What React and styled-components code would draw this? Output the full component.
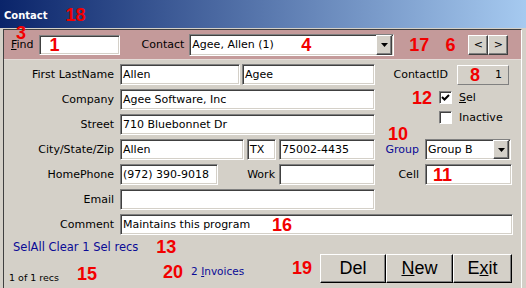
import React from 'react'
import styled, { createGlobalStyle } from 'styled-components'

const GlobalStyle = createGlobalStyle`
  html, body {
    margin: 0;
    padding: 0;
    background: #d4d0c8;
  }
  body {
    font-family: "DejaVu Sans", Verdana, sans-serif;
    font-size: 11px;
    color: #000;
  }
  * {
    box-sizing: border-box;
  }
`

const Window = styled.div`
  display: flex;
  flex-direction: column;
  width: 526px;
  height: 288px;
  overflow: hidden;
  background: #d4d0c8;
`

const TitleBar = styled.div`
  display: flex;
  align-items: center;
  flex: none;
  height: 28px;
  padding: 2px 0 0 4px;
  background: linear-gradient(to right, #0a246a, #a6caf0);
  color: #fff;
  font-weight: bold;
  font-size: 10px;
`

// red annotation numbers
const Num = styled.span`
  font-family: "Liberation Sans", Arial, sans-serif;
  font-weight: bold;
  font-size: 18px;
  line-height: 18px;
  color: #f20000;
  white-space: nowrap;
  margin-left: ${p => p.$ml || 0}px;
  margin-top: ${p => (p.$drop || 0) * 2}px;
`

const OverNum = styled(Num)`
  position: absolute;
  left: ${p => p.$left}px;
  top: ${p => (p.$top === undefined ? 'auto' : p.$top + 'px')};
  bottom: ${p => (p.$bottom === undefined ? 'auto' : p.$bottom)};
`

const Client = styled.div`
  display: flex;
  flex-direction: column;
  flex: 1;
  margin: 1px 4px 0 3px;
  border-top: 1px solid #404040;
  border-left: 1px solid #404040;
  border-right: 1px solid #fff;
`

const Toolbar = styled.div`
  display: flex;
  align-items: center;
  flex: none;
  height: 30px;
  padding-left: 7px;
  background: #c49a9a;
  border-bottom: 1px solid #e4dcd8;
`

const Label = styled.span`
  position: relative;
  line-height: 13px;
  white-space: nowrap;
  margin-left: ${p => p.$ml || 0}px;
  color: ${p => (p.$link ? '#0a0a96' : '#000')};
`

const Field = styled.div`
  position: relative;
  display: flex;
  align-items: center;
  flex: none;
  width: ${p => p.$w}px;
  height: ${p => p.$h || 21}px;
  margin-left: ${p => p.$ml || 0}px;
  padding: 0 1px 0 2px;
  background: #fff;
  border: 1px solid;
  border-color: #808080 #fff #fff #808080;
  box-shadow: inset 1px 1px 0 #404040, inset -1px -1px 0 #d4d0c8;
  white-space: nowrap;
  overflow: hidden;
`

const ReadBox = styled.div`
  position: relative;
  display: flex;
  align-items: center;
  justify-content: flex-end;
  width: 52px;
  height: 20px;
  padding-right: 6px;
  background: #d4d0c8;
  border: 1px solid;
  border-color: #fff #808080 #808080 #fff;
`

const DropBtn = styled.span`
  display: flex;
  align-items: center;
  justify-content: center;
  flex: none;
  width: 16px;
  height: 100%;
  margin-left: auto;
  background: #d4d0c8;
  border: 1px solid;
  border-color: #fff #404040 #404040 #fff;
  box-shadow: inset -1px -1px 0 #808080;
`

const NavBtn = styled.button`
  display: flex;
  align-items: center;
  justify-content: center;
  width: 20px;
  height: 20px;
  margin-left: ${p => p.$ml || 0}px;
  padding: 0;
  background: #d4d0c8;
  border: 1px solid;
  border-color: #fff #404040 #404040 #fff;
  box-shadow: inset -1px -1px 0 #808080;
  font-family: "DejaVu Sans", sans-serif;
  font-size: 11px;
  color: #000;
`

const Body = styled.div`
  display: flex;
  flex-direction: column;
  flex: 1;
  padding-top: 4px;
`

const Form = styled.div`
  display: grid;
  grid-template-columns: 116px 255px 138px;
  grid-auto-rows: 21px;
  row-gap: 4px;
`

const RowLabel = styled.div`
  display: flex;
  align-items: center;
  justify-content: flex-end;
  padding-right: 6px;
  white-space: nowrap;
`

const Cell = styled.div`
  display: flex;
  align-items: center;
  gap: ${p => p.$gap || 0}px;
  grid-column: ${p => p.$col || 'auto'};
  grid-row: ${p => p.$row || 'auto'};
`

const Slot = styled.span`
  position: relative;
  display: flex;
  align-items: center;
  justify-content: flex-end;
  flex: none;
  width: ${p => p.$w}px;
  padding-right: ${p => p.$pr || 0}px;
  white-space: nowrap;
  color: ${p => (p.$link ? '#0a0a96' : '#000')};
`

const Checks = styled.div`
  display: flex;
  flex-direction: column;
  gap: 7px;
  grid-column: 3;
  grid-row: 2 / span 2;
  padding-top: 2px;
`

const CheckRow = styled.div`
  display: flex;
  align-items: center;
  height: 13px;
`

const Box = styled.span`
  display: flex;
  align-items: center;
  justify-content: center;
  flex: none;
  width: 13px;
  height: 13px;
  margin-right: 7px;
  background: #fff;
  border: 1px solid;
  border-color: #808080 #fff #fff #808080;
  box-shadow: inset 1px 1px 0 #404040;
`

const LinksRow = styled.div`
  display: flex;
  align-items: center;
  height: 13px;
  margin-top: 5px;
  padding-left: 9px;
  font-size: 11.5px;
  color: #0a0a96;
`

const Footer = styled.div`
  display: flex;
  align-items: center;
  height: 30px;
  padding: 0 9px 0 5px;
`

const Info = styled.span`
  font-size: 9.5px;
  white-space: nowrap;
  margin-top: ${p => (p.$drop || 0) * 2}px;
`

const Link = styled.span`
  font-size: 10.5px;
  color: #0a0a96;
  white-space: nowrap;
  margin-left: ${p => p.$ml || 0}px;
  margin-top: ${p => (p.$drop || 0) * 2}px;
`

const Actions = styled.div`
  display: flex;
  align-items: center;
  margin-left: auto;
`

const BigBtn = styled.button`
  width: ${p => p.$w}px;
  height: 29px;
  padding: 0;
  background: #d4d0c8;
  border: 1px solid;
  border-color: #fff #000 #000 #fff;
  box-shadow: inset -1px -1px 0 #808080;
  font-family: "Liberation Sans", Arial, sans-serif;
  font-size: 18px;
  color: #000;
  u {
    text-decoration-thickness: 1px;
  }
`

const Arrow = () => (
  <svg width="7" height="4" viewBox="0 0 7 4">
    <polygon points="0,0 7,0 3.5,4" fill="#000" />
  </svg>
)

const Tick = () => (
  <svg width="9" height="9" viewBox="0 0 9 9">
    <polyline points="1,4 3.5,6.5 8,2" fill="none" stroke="#000" strokeWidth="2" />
  </svg>
)

const App = () => {
  return (
    <Window>
      <GlobalStyle />
      <TitleBar>
        Contact
        <Num $ml={18}>18</Num>
      </TitleBar>
      <Client>
        <Toolbar>
          <Label>
            <OverNum $left={5} $top={-14}>3</OverNum>
            <u>F</u>ind
          </Label>
          <Field $w={81} $h={20} $ml={5}>
            <OverNum $left={10} $top={0}>1</OverNum>
          </Field>
          <Label $ml={22}>Contact</Label>
          <Field $w={205} $h={22} $ml={5}>
            Agee, Allen (1)
            <OverNum $left={111} $top={1}>4</OverNum>
            <DropBtn><Arrow /></DropBtn>
          </Field>
          <Num $ml={15}>17</Num>
          <Num $ml={16}>6</Num>
          <NavBtn $ml={13}>&lt;</NavBtn>
          <NavBtn>&gt;</NavBtn>
        </Toolbar>
        <Body>
          <Form>
            <RowLabel>First LastName</RowLabel>
            <Cell $gap={2}>
              <Field $w={120}>Allen</Field>
              <Field $w={133}>Agee</Field>
            </Cell>
            <Cell>
              <Slot $w={82} $pr={9}>ContactID</Slot>
              <ReadBox>
                <OverNum $left={12} $top={0}>8</OverNum>
                1
              </ReadBox>
            </Cell>

            <RowLabel>Company</RowLabel>
            <Cell><Field $w={255}>Agee Software, Inc</Field></Cell>
            <Checks>
              <CheckRow>
                <Slot $w={64} $pr={7}><Num>12</Num></Slot>
                <Box><Tick /></Box>
                <u>S</u>el
              </CheckRow>
              <CheckRow>
                <Slot $w={64} />
                <Box />
                Inactive
              </CheckRow>
            </Checks>

            <RowLabel>Street</RowLabel>
            <Cell><Field $w={255}>710 Bluebonnet Dr</Field></Cell>

            <RowLabel>City/State/Zip</RowLabel>
            <Cell $gap={3}>
              <Field $w={124}>Allen</Field>
              <Field $w={29}>TX</Field>
              <Field $w={96}>75002-4435</Field>
            </Cell>
            <Cell $col={3}>
              <Slot $w={50} $pr={6} $link>
                <OverNum $left={13} $bottom="100%">10</OverNum>
                Group
              </Slot>
              <Field $w={86}>
                Group B
                <DropBtn><Arrow /></DropBtn>
              </Field>
            </Cell>

            <RowLabel>HomePhone</RowLabel>
            <Cell>
              <Field $w={98}>(972) 390-9018</Field>
              <Slot $w={61} $pr={4}>Work</Slot>
              <Field $w={96} />
            </Cell>
            <Cell>
              <Slot $w={50} $pr={6}>Cell</Slot>
              <Field $w={87}>
                <OverNum $left={7} $top={1}>11</OverNum>
              </Field>
            </Cell>

            <RowLabel>Email</RowLabel>
            <Cell><Field $w={255} /></Cell>

            <RowLabel style={{ gridRow: 7 }}>Comment</RowLabel>
            <Cell $col="2 / span 2" $row={7}>
              <Field $w={393}>
                Maintains this program
                <OverNum $left={151} $top={1}>16</OverNum>
              </Field>
            </Cell>
          </Form>
          <LinksRow>
            SelAll Clear 1 Sel recs
            <Num $ml={18}>13</Num>
          </LinksRow>
          <Footer>
            <Info $drop={9}>1 of 1 recs</Info>
            <Num $ml={18} $drop={6}>15</Num>
            <Num $ml={66} $drop={4}>20</Num>
            <Link $ml={8} $drop={3}>2 <u>I</u>nvoices</Link>
            <Actions>
              <Num>19</Num>
              <BigBtn $w={66} style={{ marginLeft: 8 }}>Del</BigBtn>
              <BigBtn $w={67}><u>N</u>ew</BigBtn>
              <BigBtn $w={59}>E<u>x</u>it</BigBtn>
            </Actions>
          </Footer>
        </Body>
      </Client>
    </Window>
  )
}

export default App
